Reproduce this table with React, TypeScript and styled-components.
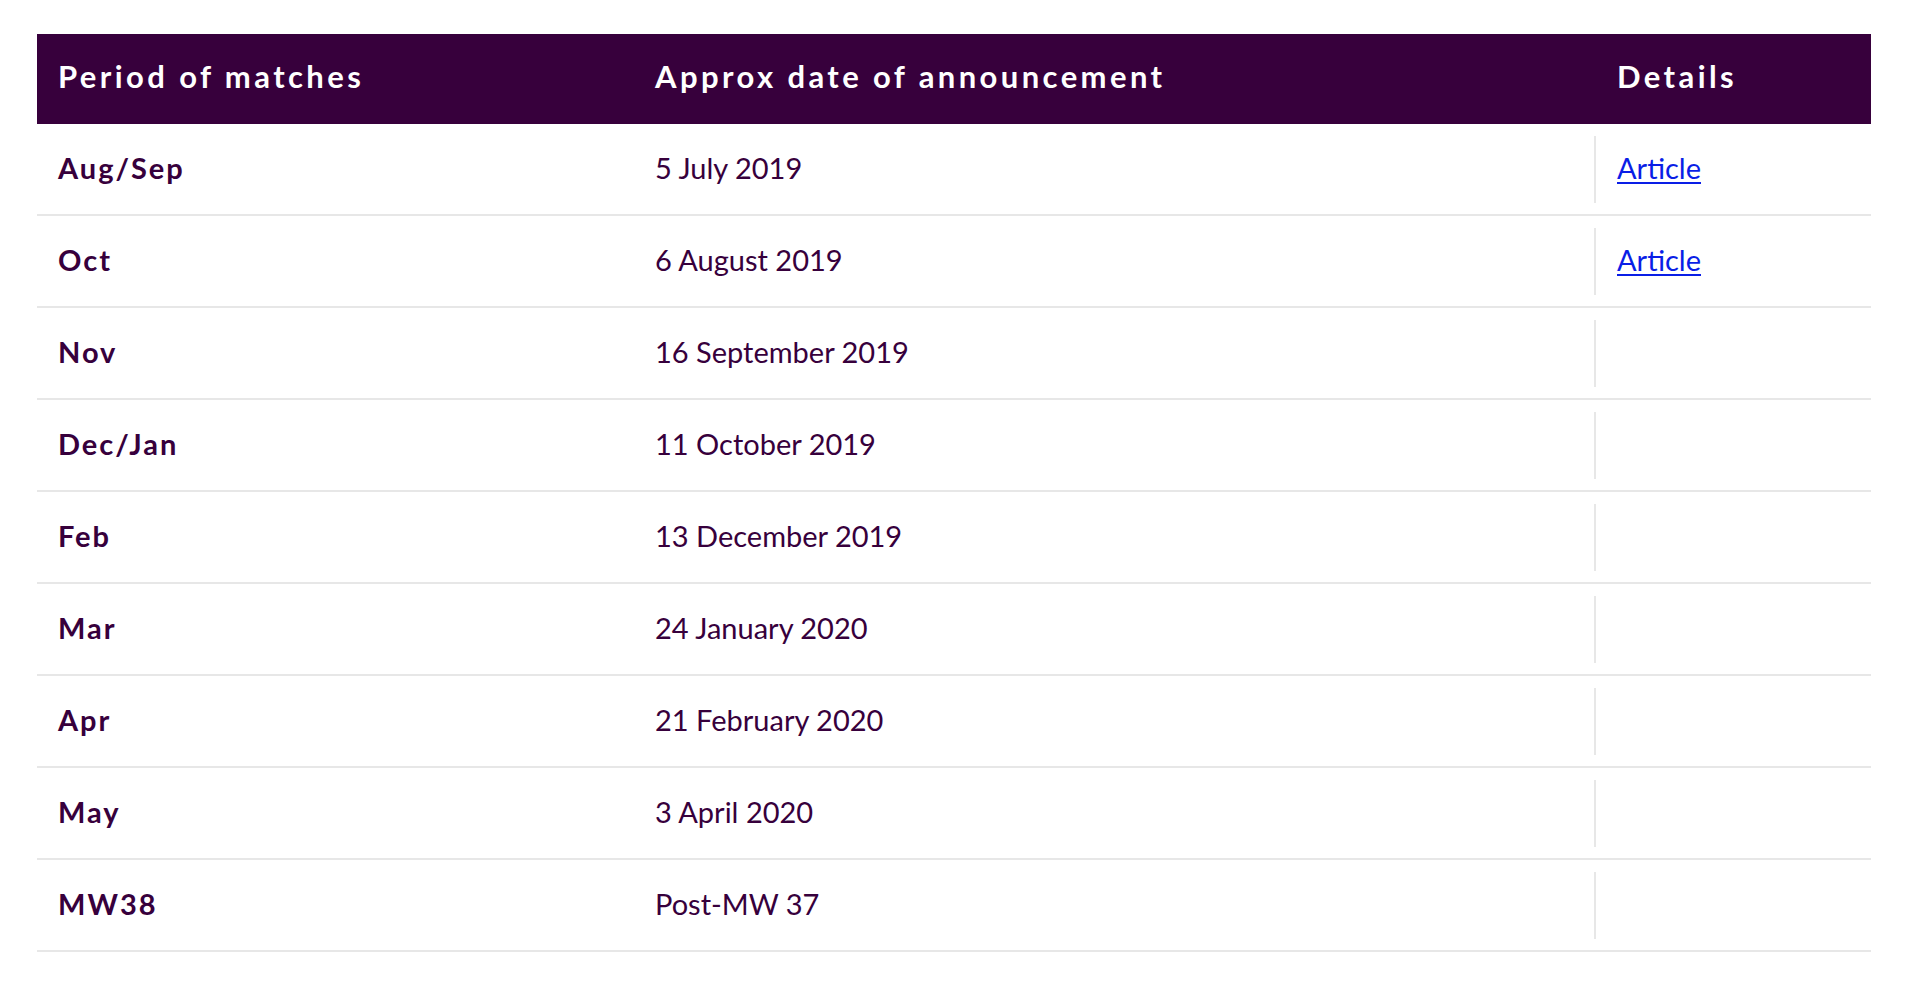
import React from "react";
import styled, { createGlobalStyle } from "styled-components";

const GlobalStyle = createGlobalStyle`
  html, body {
    margin: 0;
    padding: 0;
    background: #ffffff;
  }
  body {
    font-family: Lato, "Open Sans", "Liberation Sans", sans-serif;
    color: #37003c;
  }
`;

const Page = styled.div`
  padding: 34px 35px 0 37px;
`;

const Table = styled.div`
  display: grid;
  grid-template-columns: 597px 960px 277px;
  width: 1834px;
`;

const HeadCell = styled.div<{ $last?: boolean }>`
  height: 90px;
  box-sizing: border-box;
  display: flex;
  align-items: center;
  background: #37003c;
  color: #ffffff;
  font-size: 31px;
  font-weight: 700;
  letter-spacing: 3.4px;
  padding-left: ${(p) => (p.$last ? "23px" : "21px")};
  padding-bottom: 7px;
`;

const Cell = styled.div<{ $bold?: boolean }>`
  height: 92px;
  box-sizing: border-box;
  display: flex;
  align-items: center;
  padding-left: 21px;
  padding-bottom: 4px;
  border-bottom: 2px solid #e7e7e7;
  font-size: 29px;
  font-weight: ${(p) => (p.$bold ? 700 : 400)};
  letter-spacing: ${(p) => (p.$bold ? "2px" : "0")};
  color: #37003c;
`;

const DetailCell = styled.div`
  height: 92px;
  box-sizing: border-box;
  border-bottom: 2px solid #e7e7e7;
  padding: 12px 0 11px;
  display: flex;
`;

const DetailInner = styled.div`
  flex: 1;
  display: flex;
  align-items: center;
  border-left: 2px solid #e7e7e7;
  padding-left: 21px;
  padding-bottom: 4px;
  font-size: 29px;
`;

const ArticleLink = styled.a`
  color: #0a1ee6;
  text-decoration: underline;
  text-underline-offset: 3px;
  text-decoration-thickness: 2px;
`;

const rows: { period: string; date: string; article?: boolean }[] = [
  { period: "Aug/Sep", date: "5 July 2019", article: true },
  { period: "Oct", date: "6 August 2019", article: true },
  { period: "Nov", date: "16 September 2019" },
  { period: "Dec/Jan", date: "11 October 2019" },
  { period: "Feb", date: "13 December 2019" },
  { period: "Mar", date: "24 January 2020" },
  { period: "Apr", date: "21 February 2020" },
  { period: "May", date: "3 April 2020" },
  { period: "MW38", date: "Post-MW 37" },
];

export default function App() {
  return (
    <>
      <GlobalStyle />
      <Page>
        <Table>
          <HeadCell>Period of matches</HeadCell>
          <HeadCell>Approx date of announcement</HeadCell>
          <HeadCell $last>Details</HeadCell>
          {rows.map((r) => (
            <React.Fragment key={r.period}>
              <Cell $bold>{r.period}</Cell>
              <Cell>{r.date}</Cell>
              <DetailCell>
                <DetailInner>
                  {r.article ? <ArticleLink href="#">Article</ArticleLink> : null}
                </DetailInner>
              </DetailCell>
            </React.Fragment>
          ))}
        </Table>
      </Page>
    </>
  );
}
